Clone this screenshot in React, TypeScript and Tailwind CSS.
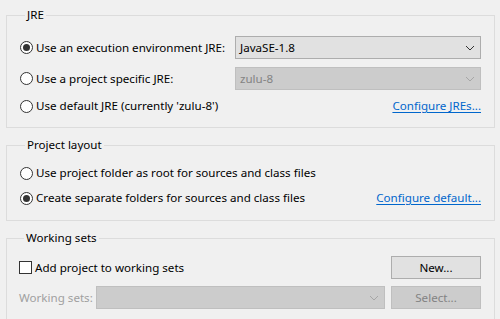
import type { ReactNode } from "react";

const font = { fontFamily: '"Noto Sans", "Open Sans", sans-serif' };

function Radio({ checked, label }: { checked?: boolean; label: string }) {
  return (
    <label className="flex items-center gap-[3px] whitespace-nowrap">
      <span className="flex h-[13px] w-[13px] shrink-0 items-center justify-center rounded-full border border-[#333333] bg-white">
        {checked && <span className="h-[7px] w-[7px] rounded-full bg-[#333333]" />}
      </span>
      <span>{label}</span>
    </label>
  );
}

function Chevron({ disabled }: { disabled?: boolean }) {
  return (
    <svg width="10" height="6" viewBox="0 0 10 6" className="shrink-0">
      <path
        d="M1 1 L5 5 L9 1"
        fill="none"
        stroke={disabled ? "#a6a6a6" : "#333333"}
        strokeWidth="1"
      />
    </svg>
  );
}

function Combo({ value, disabled, className }: { value?: string; disabled?: boolean; className?: string }) {
  return (
    <div
      className={`flex h-[23px] items-center justify-between border pl-[4px] pr-[5px] ${
        disabled ? "border-[#bfbfbf] bg-[#cccccc] text-[#838383]" : "border-[#adadad] bg-[#e1e1e1] text-black"
      } ${className ?? ""}`}
    >
      <span>{value}</span>
      <Chevron disabled={disabled} />
    </div>
  );
}

function Group({ title, className, children }: { title: string; className?: string; children: ReactNode }) {
  return (
    <fieldset className={`ml-[6px] w-[489px] border border-[#dcdcdc] ${className ?? ""}`}>
      <legend className="ml-[5px] px-[2px] leading-[16px]">{title}</legend>
      {children}
    </fieldset>
  );
}

export default function App() {
  return (
    <div
      className="h-[319px] w-[500px] overflow-hidden bg-[#f0f0f0] pt-[7px] text-[11.6px] leading-[16px] text-black"
      style={font}
    >
      <Group title="JRE" className="pb-[10px] pl-[13px] pr-[13px]">
        <div className="mt-[13px] flex h-[23px] items-center">
          <div className="w-[215px] shrink-0">
            <Radio checked label="Use an execution environment JRE:" />
          </div>
          <Combo value="JavaSE-1.8" className="flex-1" />
        </div>
        <div className="mt-[8px] flex h-[23px] items-center">
          <div className="w-[215px] shrink-0">
            <Radio label="Use a project specific JRE:" />
          </div>
          <Combo value="zulu-8" disabled className="flex-1" />
        </div>
        <div className="mt-[5px] flex h-[22px] items-center justify-between">
          <Radio label="Use default JRE (currently 'zulu-8')" />
          <a className="text-[#0066cc] underline underline-offset-[2px]">Configure JREs...</a>
        </div>
      </Group>

      <Group title="Project layout" className="mt-[9px] pb-[11px] pl-[13px] pr-[13px]">
        <div className="mt-[9px] flex h-[22px] items-center">
          <Radio label="Use project folder as root for sources and class files" />
        </div>
        <div className="mt-[3px] flex h-[22px] items-center justify-between">
          <Radio checked label="Create separate folders for sources and class files" />
          <a className="text-[#0066cc] underline underline-offset-[2px]">Configure default...</a>
        </div>
      </Group>

      <Group title="Working sets" className="mt-[9px] pb-[12px] pl-[12px] pr-[13px]">
        <div className="mt-[10px] flex h-[23px] items-center justify-between">
          <label className="flex items-center gap-[3px]">
            <span className="h-[13px] w-[13px] shrink-0 border border-[#333333] bg-white" />
            <span>Add project to working sets</span>
          </label>
          <div className="flex h-[23px] w-[90px] items-center justify-center border border-[#adadad] bg-[#e1e1e1]">
            New...
          </div>
        </div>
        <div className="mt-[7px] flex h-[23px] items-center">
          <span className="w-[77px] shrink-0 whitespace-nowrap text-[#a0a0a0]">Working sets:</span>
          <Combo disabled className="w-[289px]" />
          <div className="ml-[6px] flex h-[23px] w-[90px] items-center justify-center border border-[#bfbfbf] bg-[#cccccc] text-[#838383]">
            Select...
          </div>
        </div>
      </Group>
    </div>
  );
}
